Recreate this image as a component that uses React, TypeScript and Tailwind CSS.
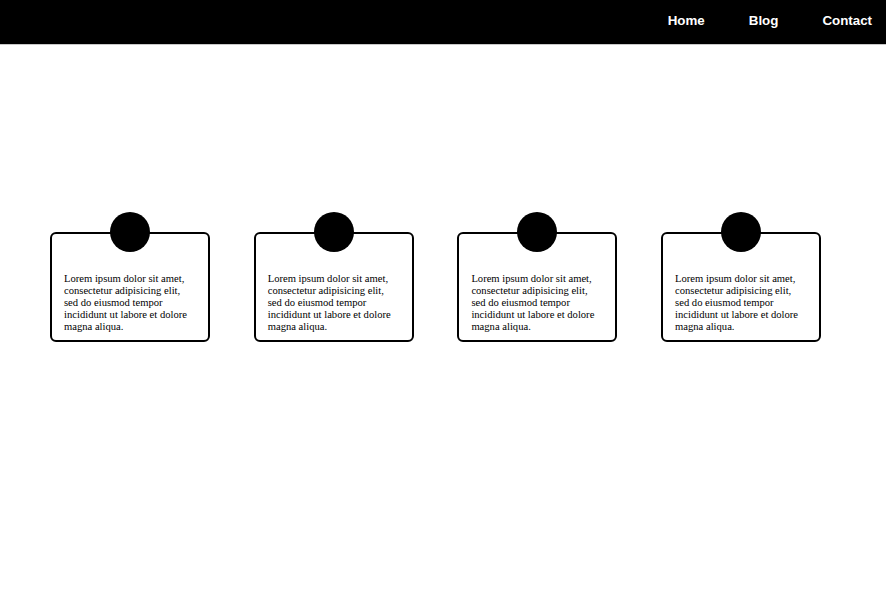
const cards = [1, 2, 3, 4];

export default function App() {
  return (
    <div className="min-h-[591px] w-full bg-white">
      <header className="flex h-[45px] items-start justify-end gap-[44px] border-b border-[#c8c8c8] bg-black pr-[14px] pt-[13px] font-['Liberation_Sans',Arial,sans-serif] text-[13.33px] font-bold leading-[16px] text-white">
        <a>Home</a>
        <a>Blog</a>
        <a>Contact</a>
      </header>

      <div className="ml-[50px] mt-[187px] flex gap-[43.7px]">
        {cards.map((c) => (
          <div
            key={c}
            className="relative h-[110px] w-[160px] rounded-[6px] border-2 border-black pb-[6px] pl-[12px] pr-[18px] pt-[39px] font-['Liberation_Serif','Times_New_Roman',serif] text-[10.6px] leading-[12px] text-black"
          >
            <div className="absolute left-1/2 top-[-22px] h-[40px] w-[40px] -translate-x-1/2 rounded-full bg-black" />
            Lorem ipsum dolor sit amet, consectetur adipisicing elit, sed do eiusmod tempor incididunt ut labore et dolore magna aliqua.
          </div>
        ))}
      </div>
    </div>
  );
}
